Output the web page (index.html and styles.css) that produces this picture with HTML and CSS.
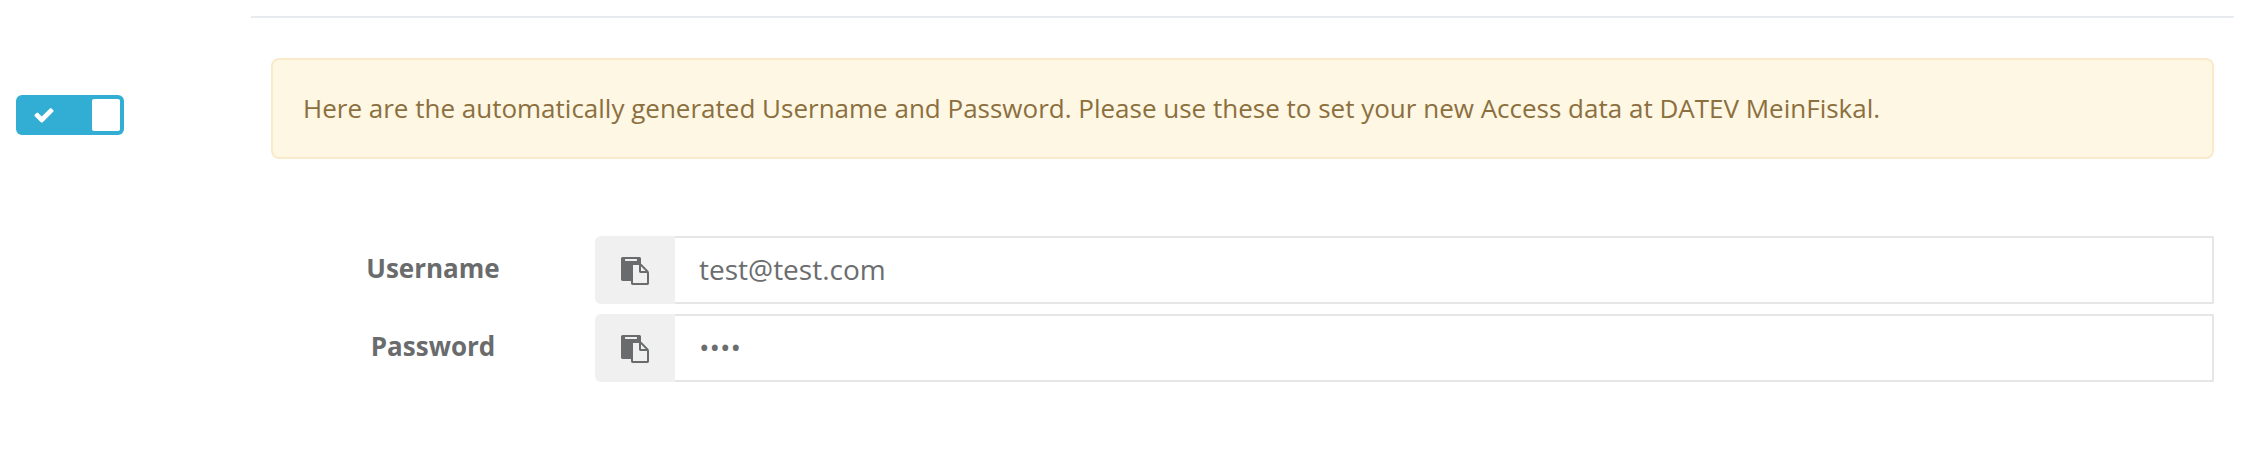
FILE: index.html
```html
<!DOCTYPE html>
<html lang="en">
<head>
<meta charset="utf-8">
<title>Access data</title>
<link rel="stylesheet" href="styles.css">
</head>
<body>
<svg class="sprite" aria-hidden="true">
  <symbol id="paste" viewBox="0 0 1792 1792"><path d="M768 1664h896v-640h-416q-40 0-68-28t-28-68v-416h-384v1152zm256-1440v-64q0-13-9.5-22.5t-22.5-9.5h-704q-13 0-22.5 9.5t-9.5 22.5v64q0 13 9.500 22.500t22.500 9.500h704q13 0 22.500-9.500t9.500-22.500zm256 672h299l-299-299v299zm512 128v672q0 40-28 68t-68 28h-960q-40 0-68-28t-28-68v-160h-544q-40 0-68-28t-28-68v-1344q0-40 28-68t68-28h1088q40 0 68 28t28 68v328q21 13 36 28l408 408q28 28 48 76t20 88z"/></symbol>
</svg>
<main class="page">
  <div class="side">
    <div class="toggle" role="switch" aria-checked="true">
      <svg class="check" viewBox="0 0 1792 1792"><path d="M1671 566q0 40-28 68l-724 724-136 136q-28 28-68 28t-68-28l-136-136-362-362q-28-28-28-68t28-68l136-136q28-28 68-28t68 28l294 295 656-657q28-28 68-28t68 28l136 136q28 28 28 68z"/></svg>
      <span class="knob"></span>
    </div>
  </div>
  <section class="content">
    <p class="alert">Here are the automatically generated Username and Password. Please use these to set your new Access data at DATEV MeinFiskal.</p>
    <div class="row">
      <label class="label" for="user">Username</label>
      <button class="copy" type="button" aria-label="Copy username"><svg class="icon"><use href="#paste"/></svg></button>
      <input class="input" id="user" type="text" value="test@test.com" readonly>
    </div>
    <div class="row">
      <label class="label" for="pass">Password</label>
      <button class="copy" type="button" aria-label="Copy password"><svg class="icon"><use href="#paste"/></svg></button>
      <input class="input" id="pass" type="text" value="••••" readonly>
    </div>
  </section>
</main>
</body>
</html>
```
FILE: styles.css
```css
* { box-sizing: border-box; }
body {
  margin: 0;
  background: #fff;
  color: #696b6d;
  font-family: "Open Sans", sans-serif;
  font-size: 26px;
}
.sprite { display: none; }
.page {
  display: flex;
  height: 452px;
  padding: 16px 12px 0 16px;
}
.side { width: 235px; padding-top: 79px; }
.toggle {
  display: flex;
  align-items: center;
  justify-content: space-between;
  width: 108px;
  height: 40px;
  padding: 0 4px 0 17px;
  border-radius: 6px;
  background: #32add3;
}
.check { width: 22px; height: 22px; fill: #fff; }
.knob { width: 28px; height: 32px; border-radius: 2px; background: #fff; }
.content {
  flex: 1;
  padding: 40px 20px 0;
  border-top: 2px solid #e7eaee;
}
.alert {
  height: 101px;
  margin: 0 0 77px;
  padding: 0 30px;
  border: 2px solid #faeacc;
  border-radius: 8px;
  background: #fdf7e3;
  color: #8c6f3f;
  line-height: 97px;
  white-space: nowrap;
}
.row { display: flex; height: 68px; margin-bottom: 10px; }
.label {
  width: 324px;
  font-weight: 700;
  line-height: 64px;
  text-align: center;
}
.copy {
  display: flex;
  align-items: center;
  justify-content: center;
  width: 80px;
  padding: 0;
  border: 0;
  border-radius: 6px 0 0 6px;
  background: #f0f0f0;
}
.icon { width: 28px; height: 28px; margin-top: 1px; fill: #696b6d; }
.input {
  flex: 1;
  min-width: 0;
  padding: 0 24px 2px;
  border: 2px solid #e5e6e7;
  border-left: 0;
  border-radius: 0 2px 2px 0;
  background: #fff;
  color: #6b6d6f;
  font: 28px "Open Sans", sans-serif;
  outline: 0;
}
```
